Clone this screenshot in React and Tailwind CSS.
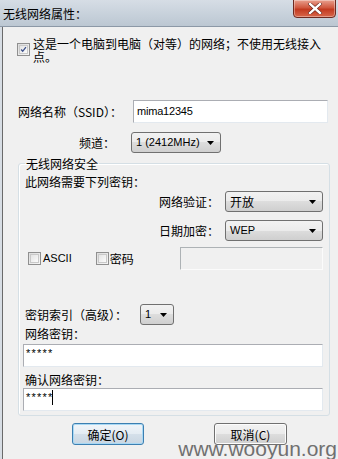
import React from 'react'

function Check({ checked }) {
  return (
    <div className="flex h-[13px] w-[13px] shrink-0 items-center justify-center border border-[#8f8f8f] bg-[linear-gradient(135deg,#dcdcdc,#f6f6f6)]">
      <div className="flex h-[9px] w-[9px] items-center justify-center border border-[#c9c9c9] bg-[linear-gradient(135deg,#e4e4e4,#fbfbfb)]">
        {checked && (
          <svg width="9" height="9" viewBox="0 0 9 9">
            <path d="M1.5 4.5 L3.5 6.8 L7.6 1.5" fill="none" stroke="#3b4f8a" strokeWidth="1.7" />
          </svg>
        )}
      </div>
    </div>
  )
}

function Arrow() {
  return (
    <svg width="7" height="4" viewBox="0 0 7 4" className="shrink-0">
      <path d="M0 0 L7 0 L3.5 4 Z" fill="#000" />
    </svg>
  )
}

function Combo({ className, children, small }) {
  return (
    <div
      className={`flex h-[21px] items-center justify-between rounded-[3px] border border-[#707070] bg-[linear-gradient(#f2f2f2,#ebebeb_50%,#dddddd_50%,#cfcfcf)] pl-[4px] pr-[6px] ${className}`}
    >
      <span className={small ? 'text-[11px]' : 'text-[12px]'}>{children}</span>
      <Arrow />
    </div>
  )
}

function TextBox({ className, children }) {
  return (
    <div
      className={`h-[23px] border border-[#e3e9ef] border-l-[#abadb3] border-t-[#abadb3] bg-white px-[2px] pt-[2px] text-[11px] leading-[13px] ${className}`}
    >
      {children}
    </div>
  )
}

export default function App() {
  return (
    <div className="relative h-[459px] w-[338px] overflow-hidden bg-[#f0f0f0] font-['Liberation_Sans','Noto_Sans_CJK_SC',sans-serif] text-[12px] leading-[13px] text-black">
      {/* title bar */}
      <div className="relative flex h-[27px] items-center border-b border-[#8c98a6] bg-[linear-gradient(#d6dde5,#c6d0da_60%,#bcc7d2)] pl-[3px]">
        <span className="font-['Noto_Sans_CJK_SC',sans-serif] text-[12px] text-black">无线网络属性：</span>
        <div className="absolute right-[2px] top-[-1px] flex h-[19px] w-[43px] items-center justify-center rounded-b-[4px] border border-[#6e2a20] bg-[linear-gradient(#e9a08e,#d0583f_45%,#c23a20_55%,#d8674a)] shadow-[inset_0_0_0_1px_rgba(255,255,255,0.35)]">
          <svg width="14" height="11" viewBox="0 0 14 11">
            <path d="M2 1 L12 10 M12 1 L2 10" stroke="#5a1a12" strokeWidth="3.6" strokeLinecap="square" />
            <path d="M2 1 L12 10 M12 1 L2 10" stroke="#ffffff" strokeWidth="2.4" strokeLinecap="square" />
          </svg>
        </div>
      </div>

      {/* body */}
      <div className="flex h-[432px] border-l-[2px] border-[#d7dde4]">
        <div className="flex w-full flex-col border-l border-[#6a6a6a] font-['Noto_Sans_CJK_SC',sans-serif]">
          {/* ad-hoc checkbox */}
          <div className="mt-[10px] flex pl-[14px]">
            <div className="mt-[6px]">
              <Check checked />
            </div>
            <div className="ml-[3px] flex flex-col text-[12px]">
              <div className="h-[13px] leading-[13px]">这是一个电脑到电脑（对等）的网络；不使用无线接入</div>
              <div className="h-[13px] leading-[13px]">点。</div>
            </div>
          </div>

          {/* SSID */}
          <div className="mt-[37px] flex items-center pl-[15px]">
            <span className="w-[115px]">网络名称（SSID）：</span>
            <TextBox className="w-[195px] pl-[3px] pt-[4px] font-['Liberation_Sans',sans-serif] tracking-[-0.2px]">
              mima12345
            </TextBox>
          </div>

          {/* channel */}
          <div className="mt-[9px] flex items-center">
            <span className="w-[112px] text-right">频道：</span>
            <Combo className="ml-[16px] w-[90px] font-['Liberation_Sans',sans-serif]" small>
              1 (2412MHz)
            </Combo>
          </div>

          {/* security group */}
          <fieldset className="ml-[15px] mt-[4px] w-[310px] rounded-[3px] border border-[#d5dfe5] px-[6px] pb-[4px] shadow-[inset_1px_1px_0_#ffffff]">
            <legend className="px-[1px] text-[12px] leading-[13px]">无线网络安全</legend>
            <div className="mt-[5px]">此网络需要下列密钥：</div>

            <div className="mt-[3px] flex items-center justify-end">
              <span>网络验证：</span>
              <Combo className="ml-[6px] w-[98px]">开放</Combo>
            </div>

            <div className="mt-[8px] flex items-center justify-end">
              <span>日期加密：</span>
              <Combo className="ml-[6px] w-[98px] font-['Liberation_Sans',sans-serif]" small>
                WEP
              </Combo>
            </div>

            <div className="mt-[6px] flex items-center">
              <div className="ml-[3px] flex items-center">
                <Check />
                <span className="ml-[2px] font-['Liberation_Sans',sans-serif] text-[11px]">ASCII</span>
              </div>
              <div className="ml-[24px] flex items-center">
                <Check />
                <span className="ml-[1px]">密码</span>
              </div>
              <div className="ml-auto h-[23px] w-[143px] border border-[#fbfbfb] border-l-[#adb2b5] border-t-[#adb2b5] bg-[#f0f0f0]" />
            </div>

            <div className="mt-[34px] flex items-center">
              <span className="w-[115px]">密钥索引（高级）：</span>
              <Combo className="w-[34px] font-['Liberation_Sans',sans-serif]" small>
                1
              </Combo>
            </div>

            <div className="mt-[2px]">网络密钥：</div>
            <TextBox className="-ml-[2px] mt-[4px] w-[300px] font-['Liberation_Sans',sans-serif] tracking-[1.2px]">
              *****
            </TextBox>

            <div className="mt-[6px]">确认网络密钥：</div>
            <TextBox className="-ml-[2px] mt-[2px] flex w-[300px] items-start font-['Liberation_Sans',sans-serif] tracking-[1.2px]">
              <span>*****</span>
              <span className="ml-[-1px] mt-[-1px] h-[15px] w-[1px] bg-black" />
            </TextBox>
          </fieldset>

          {/* buttons */}
          <div className="mt-[7px] flex">
            <button className="ml-[69px] flex h-[22px] w-[72px] items-center justify-center rounded-[3px] border border-[#3c7fb1] bg-[linear-gradient(#f1f5f9,#e4ecf3_50%,#d5e0ea_50%,#c9d6e2)] text-[12px] shadow-[inset_0_0_0_1px_#a9d8f4]">
              确定(O)
            </button>
            <button className="ml-[70px] flex h-[22px] w-[73px] items-center justify-center rounded-[3px] border border-[#707070] bg-[linear-gradient(#f2f2f2,#ebebeb_50%,#dddddd_50%,#cfcfcf)] text-[12px] shadow-[inset_0_0_0_1px_#fcfcfc]">
              取消(C)
            </button>
          </div>
        </div>
      </div>

      {/* watermark */}
      <div className="absolute bottom-[-1px] right-[1px] font-['Liberation_Sans',sans-serif] text-[21px] leading-[22px] text-[#707070]">
        www.wooyun.org
      </div>
    </div>
  )
}
